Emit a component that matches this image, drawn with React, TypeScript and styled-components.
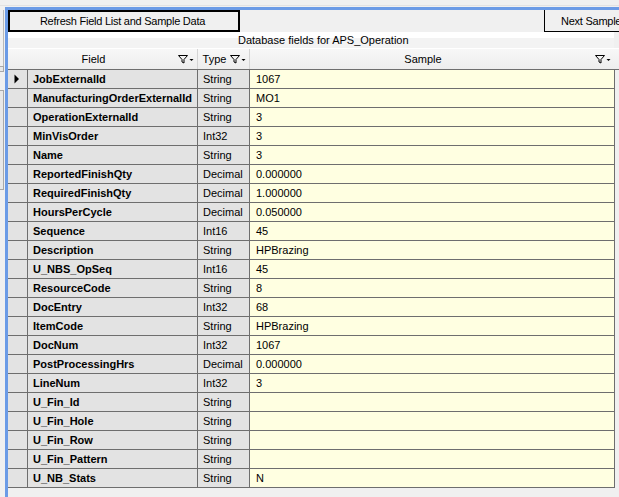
import React from "react";
import styled, { createGlobalStyle } from "styled-components";

const Global = createGlobalStyle`
  html, body { margin: 0; padding: 0; background: #f0f0f0; }
  body { font-family: "Liberation Sans", Arial, sans-serif; font-size: 11px; color: #000; }
`;

const Page = styled.div`
  width: 619px;
  height: 497px;
  overflow: hidden;
  display: flex;
  flex-direction: column;
  background: #f0f0f0;
`;

const TopStrip = styled.div`
  height: 7px;
  flex-shrink: 0;
  box-sizing: border-box;
  border-top: 5px solid #f0f0f0;
  border-bottom: 1px solid #f0f0f0;
  background: #e2e2e2;
`;

const Body = styled.div`
  flex: 1;
  display: flex;
  min-height: 0;
`;

const LeftStrip = styled.div`
  width: 5px;
  flex-shrink: 0;
  display: flex;
  flex-direction: column;
  padding-top: 3px;
  box-sizing: border-box;
`;

const StripLine = styled.div`
  height: 56px;
  width: 4px;
  box-sizing: border-box;
  border-right: 1px solid #b9b9b9;
`;

const StripBox = styled.div<{ $h: number; $mt: number }>`
  height: ${(p) => p.$h}px;
  margin-top: ${(p) => p.$mt}px;
  width: 4px;
  box-sizing: border-box;
  border: 1px solid #a8a8a8;
  border-left: none;
  background: #e8e8e8;
`;

const Panel = styled.div`
  flex: 1;
  min-width: 0;
  border-left: 3px solid #6b9be6;
  border-top: 3px solid #6b9be6;
  display: flex;
  flex-direction: column;
`;

const ButtonRow = styled.div`
  display: grid;
  grid-template-columns: 232px 304px 100px;
  height: 22px;
  flex-shrink: 0;
`;

const Button = styled.div<{ $focused?: boolean }>`
  box-sizing: border-box;
  height: 22px;
  display: flex;
  align-items: center;
  background: #f0f0f0;
  letter-spacing: -0.25px;
  white-space: nowrap;
  ${(p) =>
    p.$focused
      ? `border: 2px solid #000; justify-content: center; padding-right: 3px;`
      : `border-left: 1px solid #000; border-bottom: 1px solid #000; padding-left: 16px;`}
`;

const Caption = styled.div`
  height: 16px;
  flex-shrink: 0;
  width: 606px;
  box-sizing: border-box;
  padding-left: 230px;
  line-height: 16px;
  background: linear-gradient(#ffffff 0, #ffffff 6px, #f3f3f3 6px, #f3f3f3 100%);
  white-space: nowrap;
`;

const Header = styled.div`
  display: grid;
  grid-template-columns: 190px 52px 365px;
  height: 22px;
  flex-shrink: 0;
  box-sizing: border-box;
  border-top: 1px solid #ffffff;
  border-bottom: 1px solid #6e6e6e;
  background: linear-gradient(#f7f7f7, #ededed);
`;

const HeaderCell = styled.div<{ $last?: boolean }>`
  display: flex;
  align-items: center;
  box-sizing: border-box;
  border-right: 1px solid ${(p) => (p.$last ? "transparent" : "#d4d4d4")};
  padding-right: 3px;
  padding-left: 2px;
`;

const HeaderLabel = styled.span`
  flex: 1;
  text-align: center;
  white-space: nowrap;
`;

const FilterIcon = () => (
  <svg width="17" height="10" viewBox="0 0 17 10">
    <path d="M1.5 1.5 H10.5 L7 5.5 V9 L5 8 V5.5 Z" fill="none" stroke="#000" strokeWidth="1" />
    <path d="M12.5 5 H16.5 L14.5 7 Z" fill="#000" />
  </svg>
);

const Grid = styled.div`
  display: grid;
  grid-template-columns: 20px 170px 52px 365px;
  grid-auto-rows: 19px;
`;

const Cell = styled.div<{ $kind: "sel" | "field" | "type" | "sample" }>`
  box-sizing: border-box;
  border-right: 1px solid #6e6e6e;
  border-bottom: 1px solid #6e6e6e;
  line-height: 18px;
  white-space: nowrap;
  overflow: hidden;
  padding-left: ${(p) => (p.$kind === "sample" ? 6 : p.$kind === "sel" ? 0 : 5)}px;
  background: ${(p) => (p.$kind === "sample" ? "#ffffe1" : "#e3e3e3")};
  font-weight: ${(p) => (p.$kind === "field" ? 700 : 400)};
  display: flex;
  align-items: center;
  ${(p) => (p.$kind === "sel" ? "justify-content: center; padding-right: 2px;" : "")}
`;

const Arrow = () => (
  <svg width="6" height="10" viewBox="0 0 6 10">
    <path d="M0.5 0.5 L5 5 L0.5 9.5 Z" fill="#000" />
  </svg>
);

const rows: [string, string, string][] = [
  ["JobExternalId", "String", "1067"],
  ["ManufacturingOrderExternalId", "String", "MO1"],
  ["OperationExternalId", "String", "3"],
  ["MinVisOrder", "Int32", "3"],
  ["Name", "String", "3"],
  ["ReportedFinishQty", "Decimal", "0.000000"],
  ["RequiredFinishQty", "Decimal", "1.000000"],
  ["HoursPerCycle", "Decimal", "0.050000"],
  ["Sequence", "Int16", "45"],
  ["Description", "String", "HPBrazing"],
  ["U_NBS_OpSeq", "Int16", "45"],
  ["ResourceCode", "String", "8"],
  ["DocEntry", "Int32", "68"],
  ["ItemCode", "String", "HPBrazing"],
  ["DocNum", "Int32", "1067"],
  ["PostProcessingHrs", "Decimal", "0.000000"],
  ["LineNum", "Int32", "3"],
  ["U_Fin_Id", "String", ""],
  ["U_Fin_Hole", "String", ""],
  ["U_Fin_Row", "String", ""],
  ["U_Fin_Pattern", "String", ""],
  ["U_NB_Stats", "String", "N"],
];

export default function App() {
  return (
    <Page>
      <Global />
      <TopStrip />
      <Body>
        <LeftStrip>
          <StripLine />
          <StripBox $h={6} $mt={0} />
          <StripBox $h={100} $mt={18} />
        </LeftStrip>
        <Panel>
          <ButtonRow>
            <Button $focused>Refresh Field List and Sample Data</Button>
            <span />
            <Button>Next Sample</Button>
          </ButtonRow>
          <Caption>Database fields for APS_Operation</Caption>
          <Header>
            <HeaderCell>
              <HeaderLabel>Field</HeaderLabel>
              <FilterIcon />
            </HeaderCell>
            <HeaderCell>
              <HeaderLabel>Type</HeaderLabel>
              <FilterIcon />
            </HeaderCell>
            <HeaderCell $last>
              <HeaderLabel>Sample</HeaderLabel>
              <FilterIcon />
            </HeaderCell>
          </Header>
          <Grid>
            {rows.map(([f, t, s], i) => (
              <React.Fragment key={f}>
                <Cell $kind="sel">{i === 0 ? <Arrow /> : null}</Cell>
                <Cell $kind="field">{f}</Cell>
                <Cell $kind="type">{t}</Cell>
                <Cell $kind="sample">{s}</Cell>
              </React.Fragment>
            ))}
          </Grid>
        </Panel>
      </Body>
    </Page>
  );
}
